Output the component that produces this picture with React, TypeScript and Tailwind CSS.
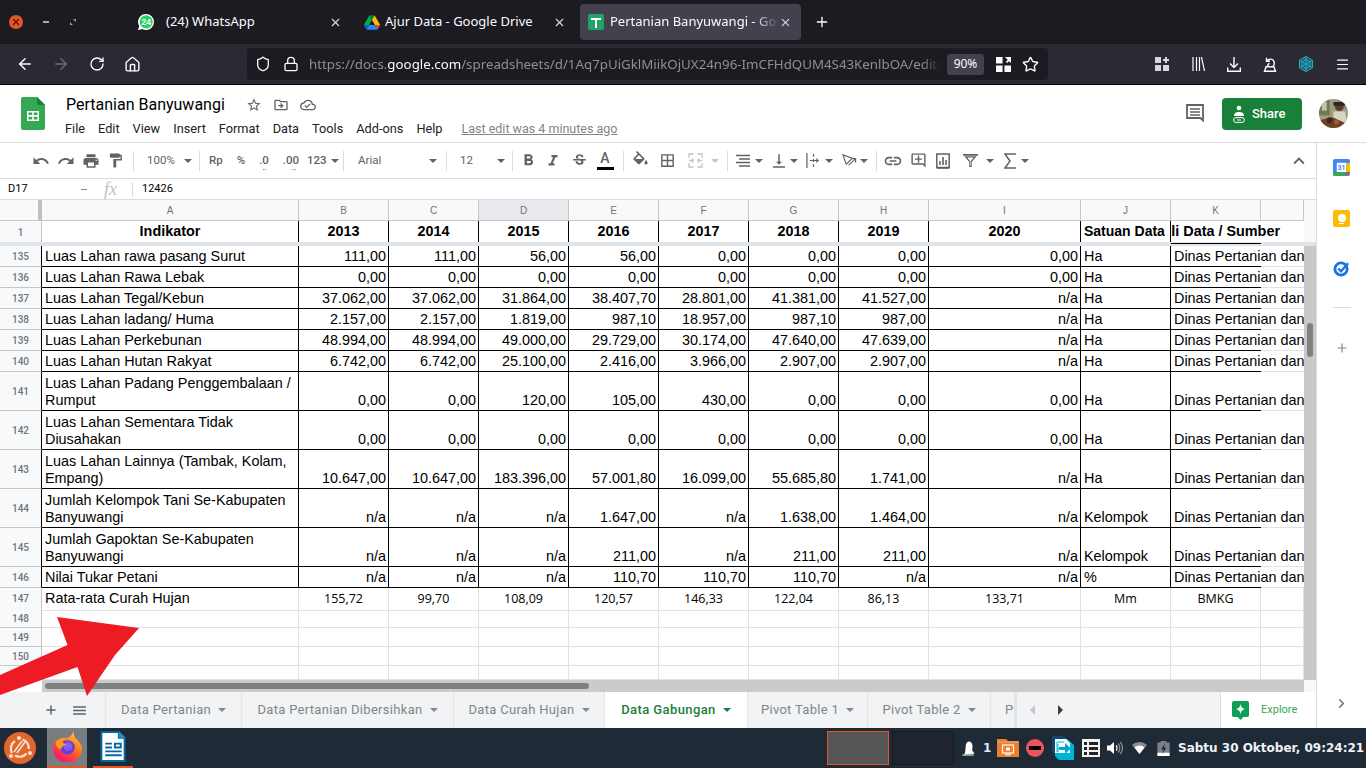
import React from "react";
import { ArrowLeft, ArrowRight, RotateCw, Home, Shield, Lock, Star, Menu, Plus, X, ChevronRight } from "lucide-react";
import {
  MdUndo, MdRedo, MdPrint, MdFormatPaint, MdFormatBold, MdFormatItalic, MdStrikethroughS,
  MdBorderAll, MdVerticalAlignBottom, MdLink, MdExpandLess, MdOutlineAddComment, MdStarBorder,
  MdOutlineCloudDone, MdOutlineDriveFileMove, MdMenu,
} from "react-icons/md";

const sans = "font-['Liberation_Sans',Arial,sans-serif]";
const ROW_GRID = "grid grid-cols-[42px_257px_90px_90px_90px_90px_90px_90px_90px_152px_90px_90px_43px]";

const Caret = ({ className = "" }: { className?: string }) => (
  <span className={`w-0 h-0 shrink-0 border-x-[4px] border-t-[4px] border-x-transparent border-t-[#5f6368] ${className}`} />
);
const Sep = ({ className = "" }: { className?: string }) => <span className={`w-px h-[20px] bg-[#dadce0] shrink-0 ${className}`} />;
const Tool = ({ className = "", children }: { className?: string; children: React.ReactNode }) => (
  <span className={`w-[24px] h-full shrink-0 flex items-center justify-center text-[#5f6368] ${className}`}>{children}</span>
);

type DataRow = { n: number; a: string[]; v: string[]; unit: string; tall?: boolean };

const rows: DataRow[] = [
  { n: 135, a: ["Luas Lahan rawa pasang Surut"], v: ["111,00", "111,00", "56,00", "56,00", "0,00", "0,00", "0,00", "0,00"], unit: "Ha" },
  { n: 136, a: ["Luas Lahan Rawa Lebak"], v: ["0,00", "0,00", "0,00", "0,00", "0,00", "0,00", "0,00", "0,00"], unit: "Ha" },
  { n: 137, a: ["Luas Lahan Tegal/Kebun"], v: ["37.062,00", "37.062,00", "31.864,00", "38.407,70", "28.801,00", "41.381,00", "41.527,00", "n/a"], unit: "Ha" },
  { n: 138, a: ["Luas Lahan ladang/ Huma"], v: ["2.157,00", "2.157,00", "1.819,00", "987,10", "18.957,00", "987,10", "987,00", "n/a"], unit: "Ha" },
  { n: 139, a: ["Luas Lahan Perkebunan"], v: ["48.994,00", "48.994,00", "49.000,00", "29.729,00", "30.174,00", "47.640,00", "47.639,00", "n/a"], unit: "Ha" },
  { n: 140, a: ["Luas Lahan Hutan Rakyat"], v: ["6.742,00", "6.742,00", "25.100,00", "2.416,00", "3.966,00", "2.907,00", "2.907,00", "n/a"], unit: "Ha" },
  { n: 141, a: ["Luas Lahan Padang Penggembalaan /", "Rumput"], v: ["0,00", "0,00", "120,00", "105,00", "430,00", "0,00", "0,00", "0,00"], unit: "Ha", tall: true },
  { n: 142, a: ["Luas Lahan Sementara Tidak", "Diusahakan"], v: ["0,00", "0,00", "0,00", "0,00", "0,00", "0,00", "0,00", "0,00"], unit: "Ha", tall: true },
  { n: 143, a: ["Luas Lahan Lainnya (Tambak, Kolam,", "Empang)"], v: ["10.647,00", "10.647,00", "183.396,00", "57.001,80", "16.099,00", "55.685,80", "1.741,00", "n/a"], unit: "Ha", tall: true },
  { n: 144, a: ["Jumlah Kelompok Tani Se-Kabupaten", "Banyuwangi"], v: ["n/a", "n/a", "n/a", "1.647,00", "n/a", "1.638,00", "1.464,00", "n/a"], unit: "Kelompok", tall: true },
  { n: 145, a: ["Jumlah Gapoktan Se-Kabupaten", "Banyuwangi"], v: ["n/a", "n/a", "n/a", "211,00", "n/a", "211,00", "211,00", "n/a"], unit: "Kelompok", tall: true },
  { n: 146, a: ["Nilai Tukar Petani"], v: ["n/a", "n/a", "n/a", "110,70", "110,70", "110,70", "n/a", "n/a"], unit: "%" },
];

const headers = ["2013", "2014", "2015", "2016", "2017", "2018", "2019", "2020"];
const letters = ["A", "B", "C", "D", "E", "F", "G", "H", "I", "J", "K", ""];
const curah = ["155,72", "99,70", "108,09", "120,57", "146,33", "122,04", "86,13", "133,71", "Mm", "BMKG"];

const RowNum = ({ n }: { n: number | string }) => (
  <div className="bg-[#f8f9fa] border-r border-b border-[#c4c7c5] flex items-center justify-center text-[10px] text-[#70757a] font-['Roboto',sans-serif] font-medium">
    {n}
  </div>
);

const SheetRow = ({ row }: { row: DataRow }) => (
  <div className={`${ROW_GRID} ${row.tall ? "h-[39px]" : "h-[21px]"}`}>
    <div className="bg-[#f8f9fa] border-r border-b border-r-black border-b-[#c4c7c5] flex items-center justify-center text-[10px] text-[#70757a] font-['Roboto',sans-serif] font-medium">
      {row.n}
    </div>
    <div className={`border-r border-b border-black pl-[3px] pb-px flex flex-col justify-end text-[14.4px] leading-[17px] text-black ${sans} whitespace-nowrap`}>
      {row.a.map((line) => (
        <span key={line}>{line}</span>
      ))}
    </div>
    {row.v.map((val, i) => (
      <div key={i} className={`border-r border-b border-black pr-[2px] pb-px flex items-end justify-end text-[14.4px] leading-[17px] text-black ${sans}`}>
        {val}
      </div>
    ))}
    <div className={`border-r border-b border-black pl-[3px] pb-px flex items-end text-[14.4px] leading-[17px] text-black ${sans}`}>{row.unit}</div>
    <div className={`col-span-2 relative pl-[3px] pb-[2px] flex items-end text-[14.4px] leading-[17px] text-black whitespace-nowrap ${sans}`}>
      Dinas Pertanian dan
      <span className="absolute left-0 bottom-0 w-[90px] h-px bg-black" />
      <span className="absolute left-[90px] bottom-0 w-[43px] h-px bg-[#e1e1e1]" />
    </div>
  </div>
);

const EmptyRow = ({ n, className }: { n: number | string; className: string }) => (
  <div className={`${ROW_GRID} ${className}`}>
    <RowNum n={n} />
    {letters.map((_, i) => (
      <div key={i} className="border-r border-b border-[#e1e1e1]" />
    ))}
  </div>
);

const SheetTab = ({ label, className, active }: { label: string; className: string; active?: boolean }) => (
  <div className={`h-full shrink-0 flex items-center justify-center gap-[7px] border-r border-[#e3e5e7] text-[13px] font-['Roboto',sans-serif] ${active ? "bg-white text-[#188038] font-medium tracking-[0.4px]" : "text-[#80868b] tracking-[0.3px]"} ${className}`}>
    {label}
    <Caret className={active ? "border-t-[#188038]" : "border-t-[#80868b]"} />
  </div>
);

const Topbar = () => (
  <div className="h-[44px] bg-[#1c1b22] flex items-center shrink-0 font-['Noto_Sans',sans-serif] text-[13px] text-[#fbfbfe]">
    <div className="w-[130px] flex items-center shrink-0 pl-[9px]">
      <span className="w-[14px] h-[14px] rounded-full bg-[#e95420] flex items-center justify-center">
        <X size={10} strokeWidth={3} className="text-[#3a1a10]" />
      </span>
      <span className="w-[6px] h-[2px] bg-[#aaa] ml-[20px]" />
      <svg viewBox="0 0 6 6" className="w-[6px] h-[6px] ml-[21px] fill-[#999]">
        <path d="M3 0h3v3zM0 3l3 3H0z" />
      </svg>
    </div>
    <div className="w-[221px] h-[36px] flex items-center pl-[7px] pr-[9px] shrink-0">
      <svg viewBox="0 0 18 18" className="w-[18px] h-[18px] shrink-0">
        <path d="M9 1a8 8 0 0 1 0 16c-1.400 0-2.700-.4-3.800-1L1 17.200l1.200-4.100A8 8 0 0 1 9 1z" fill="#fff" />
        <circle cx="9.200" cy="8.800" r="6.600" fill="#25d366" />
        <text x="9.200" y="11.700" textAnchor="middle" fontSize="8.500" fontWeight="700" fill="#fff" fontFamily="Liberation Sans">24</text>
      </svg>
      <span className="ml-[11px] flex-1">(24) WhatsApp</span>
      <X size={13} className="text-[#ddd]" />
    </div>
    <div className="w-[221px] h-[36px] flex items-center pl-[9px] pr-[10px] ml-[4px] shrink-0">
      <svg viewBox="0 0 87.300 78" className="w-[16px] h-[15px] shrink-0">
        <path d="M6.600 66.850l3.850 6.650c.8 1.400 1.950 2.500 3.300 3.300L27.500 53H0c0 1.550.4 3.100 1.200 4.500z" fill="#0066da" />
        <path d="M43.650 25L29.900 1.200c-1.350.8-2.500 1.900-3.300 3.300L1.200 48.500A9.060 9.060 0 0 0 0 53h27.500z" fill="#00ac47" />
        <path d="M73.550 76.800c1.350-.8 2.500-1.900 3.300-3.300l1.600-2.750L86.100 57.500c.8-1.400 1.200-2.950 1.200-4.500H59.800l5.850 11.500z" fill="#ea4335" />
        <path d="M43.650 25L57.400 1.200C56.050.4 54.500 0 52.900 0H34.400c-1.600 0-3.150.45-4.500 1.200z" fill="#00832d" />
        <path d="M59.800 53H27.500L13.750 76.800c1.350.8 2.900 1.200 4.500 1.200h50.800c1.600 0 3.150-.45 4.500-1.200z" fill="#2684fc" />
        <path d="M73.400 26.500L60.700 4.500c-.8-1.400-1.950-2.500-3.300-3.300L43.650 25 59.800 53h27.450c0-1.550-.4-3.100-1.200-4.500z" fill="#ffba00" />
      </svg>
      <span className="ml-[5px] flex-1">Ajur Data - Google Drive</span>
      <X size={13} className="text-[#ddd]" />
    </div>
    <div className="w-[221px] h-[36px] flex items-center pl-[8px] pr-[9px] ml-[4px] shrink-0 rounded-[4px] bg-[#42414d]">
      <span className="w-[16px] h-[16px] rounded-[2px] bg-[#1fa463] relative shrink-0 flex items-center justify-center">
        <span className="w-[10px] h-[2px] bg-white absolute top-[4px]" />
        <span className="w-[2px] h-[10px] bg-white absolute top-[4px]" />
      </span>
      <span className="ml-[6px] w-[170px] whitespace-nowrap overflow-hidden [mask-image:linear-gradient(to_right,black_85%,transparent)]">Pertanian Banyuwangi - Google</span>
      <X size={13} className="text-[#ddd] ml-auto" />
    </div>
    <Plus size={16} className="ml-[13px] text-[#fbfbfe]" />
  </div>
);

const Navbar = () => (
  <div className="h-[41px] bg-[#2b2a33] border-b border-black flex items-center shrink-0 text-[#fbfbfe] font-['Noto_Sans',sans-serif]">
    <div className="w-[247px] shrink-0 flex items-center pl-[16px]">
      <ArrowLeft size={18} />
      <ArrowRight size={18} className="ml-[18px] text-[#6d6c75]" />
      <RotateCw size={16} className="ml-[19px]" />
      <Home size={17} className="ml-[19px]" />
    </div>
    <div className="w-[801px] h-[32px] rounded-[4px] bg-[#1c1b22] flex items-center pl-[8px] shrink-0">
      <Shield size={16} />
      <Lock size={16} className="ml-[12px]" />
      <span className="ml-[10px] mt-px w-[632px] shrink-0 overflow-hidden whitespace-nowrap text-[13.300px] text-[#8f8f94] [mask-image:linear-gradient(to_right,black_97%,transparent)]">
        https://docs.<span className="text-[#fbfbfe]">google.com</span>/spreadsheets/d/1Aq7pUiGklMiikOjUX24n96-ImCFHdQUM4S43KenlbOA/edit#
      </span>
      <span className="ml-[6px] w-[37px] h-[21px] rounded-[3px] bg-[#42414d] text-[12px] flex items-center justify-center">90%</span>
      <svg viewBox="0 0 16 16" className="w-[15px] h-[15px] ml-[12px] fill-[#fbfbfe]">
        <path d="M0 0h7v7H0zM0 9h7v7H0zM9 9h7v7H9zM9.500 0H16v6.500l-2-2-2 2-1.500-1.500 2-2z" />
      </svg>
      <Star size={17} className="ml-[11px]" />
    </div>
    <div className="flex-1 flex items-center">
      <svg viewBox="0 0 14 14" className="ml-[107px] w-[14px] h-[14px] fill-[#d8d8dc] shrink-0">
        <path d="M0 0h6v6H0zM0 8h6v6H0zM8 8h6v6H8zM10 0h2v2h2v2h-2v2h-2V4H8V2h2z" />
      </svg>
      <svg viewBox="0 0 13 14" className="ml-[23px] w-[13px] h-[14px] stroke-[#fbfbfe] fill-none shrink-0" strokeWidth="1.200">
        <path d="M1 0v14M4.500 0v14M7.500 0v14M9.500 0l3 14" />
      </svg>
      <svg viewBox="0 0 14 15" className="ml-[22px] w-[14px] h-[15px] stroke-[#fbfbfe] fill-none shrink-0" strokeWidth="1.400">
        <path d="M7 0v10M3 6.500L7 10.500 11 6.500M.7 10.500v3.800h12.600v-3.800" />
      </svg>
      <svg viewBox="0 0 14 15" className="ml-[22px] w-[14px] h-[15px] stroke-[#fbfbfe] fill-none shrink-0" strokeWidth="1.400">
        <path d="M1.500 14.300h11l-1.600-4.500H3.100z" />
        <path d="M3.800 4C6 1.300 10 1.500 11 4.500c.6 2 0 4-1 5.300M3.500.8v3.500H7M4.500 9.800c0-1.500.5-3 2-3.500" />
      </svg>
      <svg viewBox="0 0 16 16" className="ml-[21px] w-[16px] h-[16px] fill-none stroke-[#2aa7b8] shrink-0" strokeWidth="1">
        <path d="M8 .5l6.500 3.700v7.600L8 15.500 1.500 11.800V4.200z" fill="#17616e" />
        <path d="M8 3.500l4 2.250v4.500L8 12.500l-4-2.250v-4.500zM8 .5v15M1.500 4.200l13 7.600M14.500 4.200l-13 7.600" />
      </svg>
      <Menu size={15} strokeWidth={1.700} className="ml-[21px] shrink-0" />
    </div>
  </div>
);

const DocHeader = () => (
  <div className="h-[58px] shrink-0 bg-white flex font-['Roboto',sans-serif] border-b border-[#dadce0]">
    <svg viewBox="0 0 24 33" className="w-[24px] h-[33px] ml-[21px] mt-[12px] shrink-0">
      <path d="M2 0h14l8 8v23a2 2 0 0 1-2 2H2a2 2 0 0 1-2-2V2a2 2 0 0 1 2-2z" fill="#34a853" />
      <path d="M16 0l8 8h-6a2 2 0 0 1-2-2z" fill="#188038" />
      <path d="M6 14h12v10H6zM7.500 15.500V18h3.700v-2.500zm5.300 0V18h3.700v-2.500zM7.500 19.700v2.800h3.700v-2.800zm5.300 0v2.800h3.700v-2.800z" fill="#fff" fillRule="evenodd" />
    </svg>
    <div className="ml-[20px] flex flex-col">
      <div className="flex items-center h-[27px] mt-[6px]">
        <span className="text-[16px] text-black w-[160px] pl-px whitespace-nowrap">Pertanian Banyuwangi</span>
        <MdStarBorder size={16} className="ml-[21px] text-[#5f6368]" />
        <MdOutlineDriveFileMove size={16} className="ml-[11px] text-[#5f6368]" />
        <MdOutlineCloudDone size={16} className="ml-[11px] text-[#5f6368]" />
      </div>
      <div className="flex items-center h-[20px] mt-[1px] text-[12.750px] text-[#202124]">
        <span>File</span>
        <span className="ml-[13px]">Edit</span>
        <span className="ml-[13px]">View</span>
        <span className="ml-[13px]">Insert</span>
        <span className="ml-[13px]">Format</span>
        <span className="ml-[13px]">Data</span>
        <span className="ml-[13px]">Tools</span>
        <span className="ml-[13px]">Add-ons</span>
        <span className="ml-[13px]">Help</span>
        <span className="ml-[19px] text-[12.500px] text-[#80868b] underline whitespace-nowrap">Last edit was 4 minutes ago</span>
      </div>
    </div>
    <div className="ml-auto flex items-start">
      <svg viewBox="0 0 18 18" className="mt-[19px] w-[18px] h-[18px] fill-none stroke-[#5f6368]" strokeWidth="1.800">
        <path d="M1 1h16v15.500L14.500 14H1z" />
        <path d="M4 5h10M4 8h10M4 11h10" strokeWidth="1.300" />
      </svg>
      <div className="ml-[18px] mt-[13px] w-[80px] h-[32px] rounded-[4px] bg-[#188038] text-white flex items-center pl-[11px]">
        <svg viewBox="0 0 12 18" className="w-[12px] h-[18px] shrink-0">
          <circle cx="6" cy="3" r="2.300" fill="#fff" />
          <path d="M1 11c0-3 2-4 5-4s5 1 5 4z" fill="#fff" />
          <rect x=".6" y="12.600" width="10.800" height="4.800" rx="2.400" fill="none" stroke="#fff" strokeWidth="1" />
          <path d="M4 15h4" stroke="#fff" strokeWidth="1" />
        </svg>
        <span className="ml-[7px] text-[13px] font-medium">Share</span>
      </div>
      <svg viewBox="0 0 30 30" className="ml-[17px] mr-[18px] mt-[14px] w-[29px] h-[29px] rounded-full">
        <rect width="30" height="30" fill="#a39a83" />
        <rect width="11" height="17" fill="#6f7a55" />
        <rect x="3" y="3" width="5" height="9" fill="#c7c2a8" />
        <rect x="19" width="11" height="10" fill="#8d8a7c" />
        <circle cx="21" cy="8" r="4.500" fill="#5a3c2a" />
        <path d="M15 3h12v4H15z" fill="#2c2620" />
        <path d="M14 30l1-17h12l3 17z" fill="#d8d3c2" />
        <path d="M0 30v-8l14-3 16 7v4z" fill="#6b4226" />
        <circle cx="11" cy="22" r="3" fill="#3a2a1e" />
        <circle cx="18" cy="24" r="2.500" fill="#a35a2e" />
      </svg>
    </div>
  </div>
);

const Toolbar = () => (
  <div className="h-[36px] shrink-0 flex items-center pl-[28px] border-b border-[#dadce0] text-[#5f6368] font-['Roboto',sans-serif] text-[11.500px]">
    <Tool className="w-[25px]"><MdUndo size={18} /></Tool>
    <Tool className="w-[25px]"><MdRedo size={18} /></Tool>
    <Tool className="w-[25px]"><MdPrint size={18} /></Tool>
    <Tool className="w-[25px]"><MdFormatPaint size={17} /></Tool>
    <Sep className="ml-[5px]" />
    <span className="ml-[13px] w-[37px]">100%</span>
    <Caret />
    <Sep className="ml-[7px]" />
    <span className="ml-[9px] w-[16px] font-medium">Rp</span>
    <span className="ml-[6px] w-[20px] text-center font-medium">%</span>
    <span className="ml-[3px] w-[20px] text-center relative font-medium">.0<span className="absolute left-[7px] top-[13px] text-[8px] leading-none">←</span></span>
    <span className="ml-[7px] w-[20px] text-center relative font-medium">.00<span className="absolute left-[8px] top-[13px] text-[8px] leading-none">→</span></span>
    <span className="ml-[6px] w-[22px] font-medium">123</span>
    <Caret className="ml-[2px]" />
    <Sep className="ml-[4px]" />
    <span className="ml-[14px] w-[71px]">Arial</span>
    <Caret />
    <Sep className="ml-[9px]" />
    <span className="ml-[13px] w-[37px]">12</span>
    <Caret />
    <Sep className="ml-[7px]" />
    <Tool className="ml-[3px]"><MdFormatBold size={19} /></Tool>
    <Tool className="ml-[1px]"><MdFormatItalic size={18} /></Tool>
    <Tool className="ml-[2px]"><MdStrikethroughS size={17} /></Tool>
    <Tool className="ml-[2px] relative">
      <span className="text-[14px] font-medium mb-[4px] text-[#5f6368]">A</span>
      <span className="absolute left-[4px] bottom-[8px] w-[17px] h-[3px] bg-black" />
    </Tool>
    <Sep className="ml-[6px]" />
    <Tool className="ml-[4px]">
      <svg viewBox="0 0 24 24" className="w-[19px] h-[19px] fill-[#5f6368]">
        <path d="M16.560 8.940L7.620 0 6.210 1.410l2.380 2.380-5.150 5.150c-.59.59-.59 1.540 0 2.120l5.500 5.500c.29.29.68.44 1.060.44s.77-.15 1.060-.44l5.500-5.500c.59-.58.59-1.530 0-2.120zM5.210 10L10 5.210 14.790 10H5.210zM19 11.500s-2 2.170-2 3.500c0 1.100.9 2 2 2s2-.9 2-2c0-1.330-2-3.500-2-3.500z" />
      </svg>
    </Tool>
    <Tool className="ml-[3px]"><MdBorderAll size={17} /></Tool>
    <Tool className="ml-[4px] text-[#c4c7ca]">
      <svg viewBox="0 0 16 16" className="w-[15px] h-[15px] fill-none stroke-[#c4c7ca]" strokeWidth="1.500">
        <path d="M1 5V1h5M15 5V1h-5M1 11v4h5M15 11v4h-5M1 8h5M10 8h5M6 8l-2-2M6 8l-2 2M10 8l2-2M10 8l2 2" />
      </svg>
    </Tool>
    <Caret className="ml-[4px] border-t-[#c4c7ca]" />
    <Sep className="ml-[8px]" />
    <Tool className="ml-[3px]">
      <svg viewBox="0 0 14 14" className="w-[14px] h-[14px] stroke-[#5f6368]" strokeWidth="1.400">
        <path d="M0 1.500h14M3 5h11M0 8.500h14M3 12h11" />
      </svg>
    </Tool>
    <Caret />
    <Tool className="ml-[4px]"><MdVerticalAlignBottom size={18} /></Tool>
    <Caret className="ml-[-1px]" />
    <Tool className="ml-[3px]">
      <svg viewBox="0 0 16 16" className="w-[15px] h-[15px] fill-none stroke-[#5f6368]" strokeWidth="1.300">
        <path d="M1 0v16M8 1v3M8 6.500v3M8 12v3M4 8h9M11 6l2 2-2 2" />
      </svg>
    </Tool>
    <Caret />
    <Tool className="ml-[4px]">
      <svg viewBox="0 0 16 16" className="w-[15px] h-[15px] fill-none stroke-[#5f6368]" strokeWidth="1.200">
        <path d="M1 2l10 3.500L4.500 12zM7 13l7-6.500M10.500 6h4v4" />
      </svg>
    </Tool>
    <Caret className="ml-[-1px]" />
    <Sep className="ml-[8px]" />
    <Tool className="ml-[4px]"><MdLink size={20} /></Tool>
    <Tool className="ml-[1px]"><MdOutlineAddComment size={17} /></Tool>
    <Tool className="ml-[1px]">
      <svg viewBox="0 0 14 16" className="w-[14px] h-[16px] fill-none stroke-[#5f6368]" strokeWidth="1.500">
        <path d="M.8 1h12.400v13.500H.8z" />
        <path d="M4 12V8M7 12V4M10 12V7" strokeWidth="1.600" />
        <path d="M.8 15.200h12.400" strokeWidth="1.200" />
      </svg>
    </Tool>
    <Tool className="ml-[3px]">
      <svg viewBox="0 0 16 16" className="w-[15px] h-[15px] fill-[#5f6368]">
        <path d="M0 1h16v1.800H0zM1.500 3.500h13L9.300 9.500V15H6.700V9.500zM4.500 4.800l3.200 3.900v5h.6v-5l3.200-3.900z" fillRule="evenodd" />
      </svg>
    </Tool>
    <Caret className="ml-[4px]" />
    <Tool className="ml-[4px]">
      <svg viewBox="0 0 12 16" className="w-[12px] h-[16px] fill-none stroke-[#5f6368]" strokeWidth="1.500">
        <path d="M11.500 1.700V1H1l5 7-5 7h10.500v-.7" />
      </svg>
    </Tool>
    <Caret className="ml-[-1px]" />
    <Tool className="ml-auto mr-[5px]"><MdExpandLess size={22} /></Tool>
  </div>
);

const FormulaBar = () => (
  <div className="h-[21px] shrink-0 flex items-center border-b border-[#dadce0] text-[11px] text-black font-['Roboto',sans-serif]">
    <span className="ml-[8px] w-[72px]">D17</span>
    <span className="w-[6px] h-px ml-px bg-[#80868b]" />
    <span className="ml-[17px] w-[20px] text-[18px] italic text-[#bdc1c6] font-['Liberation_Serif',serif] leading-none">fx</span>
    <span className="ml-[8px] w-px h-[15px] bg-[#dadce0]" />
    <span className="ml-[9px]">12426</span>
  </div>
);

const Grid = () => (
  <div className="h-[492px] shrink-0 flex">
    <div className="w-[1304px] flex flex-col shrink-0 overflow-hidden">
      <div className={`${ROW_GRID} h-[21px] shrink-0`}>
        <div className="bg-[#f8f9fa] border-b border-[#c4c7c5] border-r-[4px] border-r-[#c0c0c0]" />
        {letters.map((c, i) => (
          <div key={i} className={`border-r border-b border-[#c4c7c5] flex items-center justify-center text-[10px] text-[#70757a] ${sans} ${c === "D" ? "bg-[#e8eaed]" : "bg-[#f8f9fa]"}`}>
            {c}
          </div>
        ))}
      </div>
      <div className={`${ROW_GRID} h-[21px] shrink-0`}>
        <div className="bg-[#f8f9fa] border-r border-[#c4c7c5] flex items-center justify-center text-[10px] text-[#70757a] font-['Roboto',sans-serif] font-medium">1</div>
        <div className={`border-r border-b border-black flex items-center justify-center text-[14.4px] font-bold text-black ${sans}`}>Indikator</div>
        {headers.map((h) => (
          <div key={h} className={`border-r border-b border-black flex items-center justify-center text-[14.4px] font-bold text-black ${sans}`}>{h}</div>
        ))}
        <div className={`border-r border-b border-black pl-[3px] flex items-center text-[14px] font-bold text-black whitespace-nowrap ${sans}`}>Satuan Data</div>
        <div className={`col-span-2 relative overflow-hidden pr-[24px] pb-px flex items-center justify-end text-[14.4px] font-bold text-black whitespace-nowrap ${sans}`}>
          <span>Asli Data / Sumber</span>
          <span className="absolute left-0 bottom-0 w-[90px] h-px bg-black" />
        </div>
      </div>
      <div className="h-[4px] shrink-0 bg-[#dfe3ea]" />
      {rows.map((row) => (
        <SheetRow key={row.n} row={row} />
      ))}
      <div className={`${ROW_GRID} h-[21px] shrink-0`}>
        <RowNum n={147} />
        <div className={`border-r border-b border-[#e1e1e1] pl-[3px] flex items-center text-[14.4px] text-black ${sans}`}>Rata-rata Curah Hujan</div>
        {curah.map((c) => (
          <div key={c} className="border-r border-b border-[#e1e1e1] pt-px flex items-center justify-center text-[12.500px] text-black font-['Open_Sans',sans-serif]">{c}</div>
        ))}
        <div className="border-r border-b border-[#e1e1e1]" />
      </div>
      <EmptyRow n={148} className="h-[19px] shrink-0" />
      <EmptyRow n={149} className="h-[19px] shrink-0" />
      <EmptyRow n={150} className="h-[19px] shrink-0" />
      <EmptyRow n="" className="h-[14px] shrink-0" />
      <div className="h-[12px] shrink-0 bg-[#cbcbcb] ml-[42px] flex items-center pl-[3px]">
        <span className="w-[544px] h-[6px] rounded-full bg-[#7f8080]" />
      </div>
    </div>
    <div className="w-[12px] flex flex-col shrink-0">
      <div className="h-[42px] shrink-0 bg-[#f8f9fa]" />
      <div className="h-[4px] shrink-0 bg-[#dfe3ea]" />
      <div className="h-[434px] shrink-0 bg-[#c8c8c8] pt-[77px] flex justify-center">
        <span className="w-[6px] h-[34px] rounded-full bg-[#7f8080]" />
      </div>
      <div className="h-[12px] shrink-0 bg-[#f8f9fa]" />
    </div>
  </div>
);

const SheetTabs = () => (
  <div className="h-[36px] shrink-0 bg-[#f1f3f4] flex items-center">
    <Plus size={14} strokeWidth={2.500} className="ml-[44px] text-[#5f6368]" />
    <MdMenu size={17} className="ml-[13px] text-[#5f6368]" />
    <span className="ml-[17px] w-px h-full bg-[#e3e5e7]" />
    <SheetTab label="Data Pertanian" className="w-[136px]" />
    <SheetTab label="Data Pertanian Dibersihkan" className="w-[212px]" />
    <SheetTab label="Data Curah Hujan" className="w-[151px]" />
    <SheetTab label="Data Gabungan" active className="w-[143px]" />
    <SheetTab label="Pivot Table 1" className="w-[120px]" />
    <SheetTab label="Pivot Table 2" className="w-[123px]" />
    <div className="w-[26px] h-full shrink-0 pl-[14px] flex items-center text-[13px] tracking-[0.3px] font-['Roboto',sans-serif] text-[#80868b] overflow-hidden border-r-[3px] border-[#e3e5e7]">Pi</div>
    <span className="ml-[13px] w-0 h-0 border-y-[5px] border-r-[5px] border-y-transparent border-r-[#c4c7ca]" />
    <span className="ml-[23px] w-0 h-0 border-y-[5px] border-l-[5px] border-y-transparent border-l-[#3c4043]" />
    <div className="ml-auto w-[96px] h-full bg-white border-l border-[#dadce0] flex items-center pl-[11px]">
      <svg viewBox="0 0 18 20" className="w-[17px] h-[19px] shrink-0">
        <path d="M2 0h14a2 2 0 0 1 2 2v13a2 2 0 0 1-2 2h-4l-3 3-3-3H2a2 2 0 0 1-2-2V2a2 2 0 0 1 2-2z" fill="#0f9d58" />
        <path d="M9 3c.5 3 1.500 4.500 5 5.500-3.500 1-4.500 2.500-5 5.500-.5-3-1.500-4.500-5-5.500 3.500-1 4.500-2.500 5-5.500z" fill="#fff" />
      </svg>
      <span className="ml-[12px] text-[11px] text-[#34a853] font-['Roboto',sans-serif]">Explore</span>
    </div>
  </div>
);

const SidePanel = () => (
  <div className="w-[50px] shrink-0 border-l border-[#dadce0] flex flex-col items-center bg-white">
    <svg viewBox="0 0 18 18" className="w-[17px] h-[17px] mt-[16px]">
      <rect width="18" height="18" rx="2" fill="#4285f4" />
      <rect x="4" y="4" width="10" height="10" fill="#fff" />
      <path d="M0 14h14v4H2a2 2 0 0 1-2-2z" fill="#34a853" />
      <path d="M14 4h4v10h-4z" fill="#fbbc04" />
      <path d="M14 14h4l-4 4z" fill="#ea4335" />
      <text x="9" y="12" textAnchor="middle" fontSize="7" fontWeight="700" fill="#4285f4" fontFamily="Roboto">31</text>
    </svg>
    <span className="mt-[34px] w-[17px] h-[17px] rounded-[2px] bg-[#fbbc04] flex flex-col items-center justify-center">
      <span className="w-[8px] h-[8px] rounded-full bg-white" />
      <span className="w-[5px] h-px mt-px bg-white" />
    </span>
    <svg viewBox="0 0 18 18" className="w-[17px] h-[17px] mt-[33px] fill-none">
      <circle cx="8.500" cy="9.500" r="6.500" stroke="#1a73e8" strokeWidth="3" />
      <path d="M5.500 9l3 3L16 3.500" stroke="#1a73e8" strokeWidth="2.500" />
    </svg>
    <span className="w-[18px] h-px mt-[30px] bg-[#dadce0]" />
    <Plus size={14} className="mt-[33px] text-[#80868b]" />
    <ChevronRight size={15} className="mt-auto mb-[17px] text-[#5f6368]" />
  </div>
);

const Taskbar = () => (
  <div className="h-[40px] shrink-0 bg-[#1f2a37] flex items-center">
    <svg viewBox="0 0 32 32" className="ml-[4px] w-[32px] h-[32px] shrink-0 fill-none">
      <circle cx="16" cy="16" r="16" fill="#e2672a" />
      <g stroke="#f8e0d0" strokeWidth="2.200">
        <path d="M18.500 7.500a9 9 0 0 1 6.300 9.500" />
        <path d="M22.500 21.500a9 9 0 0 1-11.500 2" />
        <path d="M8 21a9 9 0 0 1 3-12" />
        <path d="M13 21l8-11M10 20l8-11" strokeWidth="1.600" />
      </g>
      <circle cx="15" cy="6" r="2" fill="#f8e0d0" />
      <circle cx="7" cy="24" r="2" fill="#f8e0d0" />
      <circle cx="26" cy="21" r="2" fill="#f8e0d0" />
    </svg>
    <div className="ml-[11px] w-[40px] h-full shrink-0 bg-[#7a7d80] border-b-2 border-[#e95420] flex items-center justify-center">
      <svg viewBox="0 0 32 32" className="w-[31px] h-[31px] mb-[2px]">
        <defs>
          <linearGradient id="fxBody" x1="0.8" y1="0" x2="0.2" y2="1">
            <stop offset="0" stopColor="#ffd43b" />
            <stop offset="0.4" stopColor="#ff7a1a" />
            <stop offset="0.75" stopColor="#ff3050" />
            <stop offset="1" stopColor="#e31587" />
          </linearGradient>
        </defs>
        <path d="M22 0c1 3 0 5 3 8 4 4 6 8 6 10a15 15 0 0 1-30 0c0-4 1-7 3-9 0 2 1 3 2 4 2-4 6-6 10-6 3-1 5-3 6-7z" fill="url(#fxBody)" />
        <circle cx="16" cy="17" r="7.500" fill="#6b3fd4" />
        <circle cx="16.500" cy="16" r="4.500" fill="#9059ff" />
        <path d="M4 11c3-3 6-4 10-4-2 2-3 3-3 5 2 1 3 1 4 2-3 1-5 2-6 5-3-1-5-4-5-8z" fill="#ff9a1f" />
      </svg>
    </div>
    <div className="ml-[6px] w-[40px] h-full shrink-0 border-b-2 border-[#e95420] flex items-center justify-center">
      <svg viewBox="0 0 26 32" className="w-[26px] h-[31px] mb-[2px]">
        <path d="M1 0h18l7 7v24a1 1 0 0 1-1 1H1a1 1 0 0 1-1-1V1a1 1 0 0 1 1-1z" fill="#0369a3" />
        <path d="M2 2h16v6h6v22H2z" fill="#fff" />
        <path d="M19 0l7 7h-7z" fill="#2a8cc7" />
        <path d="M5 12h7v2H5zM5 16h7v2H5zM14 12h8v6h-8zM5 20h17v2H5zM5 24h17v2H5z" fill="#0369a3" />
        <path d="M16 14h4v2h-4z" fill="#fff" />
      </svg>
    </div>
    <span className="ml-[694px] w-[62px] h-[34px] shrink-0 bg-[#555] border border-[#e95420]" />
    <span className="ml-[3px] w-[62px] h-[34px] shrink-0 bg-[#1e2530] border border-[#141a22]" />
    <svg viewBox="0 0 13 16" className="ml-[8px] w-[13px] h-[15px] fill-white shrink-0">
      <path d="M7 .5c3 .3 4 3 3.700 5.500l-.2 4 2.500 3.500-11 .5C3.500 12 3 9 3.500 5.500 3.800 2.500 5 .5 7 .5zM0 14.500h12v1H0z" />
    </svg>
    <span className="ml-[8px] w-[7px] text-[12px] font-bold text-[#dfe8f5] font-['DejaVu_Sans',sans-serif]">1</span>
    <svg viewBox="0 0 22 18" className="ml-[7px] w-[22px] h-[18px] shrink-0">
      <path d="M0 0h9l2 2h11v16H0z" fill="#ed7d31" />
      <path d="M1 3h20" stroke="#f7b48a" strokeWidth=".8" />
      <rect x="5.500" y="6" width="11" height="8" fill="none" stroke="#fff" strokeWidth="1.200" />
      <rect x="9" y="8.500" width="4" height="3" fill="#fff" />
      <path d="M8 15.800h6" stroke="#fff" strokeWidth="1" />
    </svg>
    <span className="ml-[7px] w-[18px] h-[18px] rounded-full bg-[#ec5560] flex items-center justify-center shrink-0">
      <span className="w-[12px] h-[4px] bg-black" />
    </span>
    <svg viewBox="0 0 22 24" className="ml-[8px] w-[22px] h-[24px] shrink-0">
      <path d="M0 0h11l4 3H3v15l-3-3z" fill="#0a4a6e" />
      <path d="M3 3h12l7 6v15H7l-4-4z" fill="#00b4d8" />
      <path d="M3 3h11l4 4v10H3z" fill="#fff" />
      <path d="M6 8v8h-1V6h7" fill="none" stroke="#00b4d8" strokeWidth="1" />
      <path d="M7 11h6V7l6 5.500-6 5.500v-4H7z" fill="#00a5d8" />
    </svg>
    <div className="ml-[8px] w-[18px] h-[18px] bg-[#f2f2f2] shrink-0 flex flex-col justify-center gap-[2px] px-[2px]">
      <span className="h-[3px] bg-[linear-gradient(to_right,#222_3px,transparent_3px,transparent_5px,#222_5px)]" />
      <span className="h-[3px] bg-[linear-gradient(to_right,#222_3px,transparent_3px,transparent_5px,#222_5px)]" />
      <span className="h-[3px] bg-[linear-gradient(to_right,#222_3px,transparent_3px,transparent_5px,#222_5px)]" />
    </div>
    <svg viewBox="0 0 16 14" className="ml-[7px] w-[16px] h-[14px] shrink-0 fill-none">
      <path d="M0 4.500h3L7 1v12L3 9.500H0z" fill="#fff" />
      <path d="M9 4.500a3.500 3.500 0 0 1 0 5" stroke="#fff" strokeWidth="1.200" />
      <path d="M11 2.500a6.500 6.500 0 0 1 0 9M13 .8a9 9 0 0 1 0 12.400" stroke="#8a8f96" strokeWidth="1.200" />
    </svg>
    <svg viewBox="0 0 15 12" className="ml-[9px] w-[15px] h-[12px] shrink-0">
      <path d="M0 3a11 11 0 0 1 15 0L7.500 12z" fill="#8a8f96" />
      <path d="M2.500 5.500a7.500 7.500 0 0 1 10 0L7.500 12z" fill="#fff" />
    </svg>
    <svg viewBox="0 0 13 16" className="ml-[10px] w-[13px] h-[15px] shrink-0">
      <path d="M3.500 0h6v1.500H13V16H0V1.500h3.500z" fill="#7d8186" />
      <path d="M0 12.500h13V16H0z" fill="#fff" />
      <path d="M8 2.500L4 9h2.500L5 14l4.500-7H7z" fill="#1f2a37" />
    </svg>
    <span className="ml-[8px] text-[12px] font-bold text-[#eef2f7] whitespace-nowrap font-['DejaVu_Sans',sans-serif]">Sabtu 30 Oktober, 09:24:21</span>
  </div>
);

export default function App() {
  return (
    <div className="w-[1366px] h-[768px] relative flex flex-col overflow-hidden bg-white">
      <Topbar />
      <Navbar />
      <DocHeader />
      <div className="flex h-[585px] shrink-0">
        <div className="w-[1316px] shrink-0 flex flex-col">
          <Toolbar />
          <FormulaBar />
          <Grid />
          <SheetTabs />
        </div>
        <SidePanel />
      </div>
      <Taskbar />
      <svg viewBox="0 0 140 82" className="absolute left-0 top-[616px] w-[140px] h-[82px] pointer-events-none">
        <path d="M57 1L139 12 115 39 87 80 77.500 51 0 79V59L67.500 29z" fill="#ed1c24" />
      </svg>
    </div>
  );
}
